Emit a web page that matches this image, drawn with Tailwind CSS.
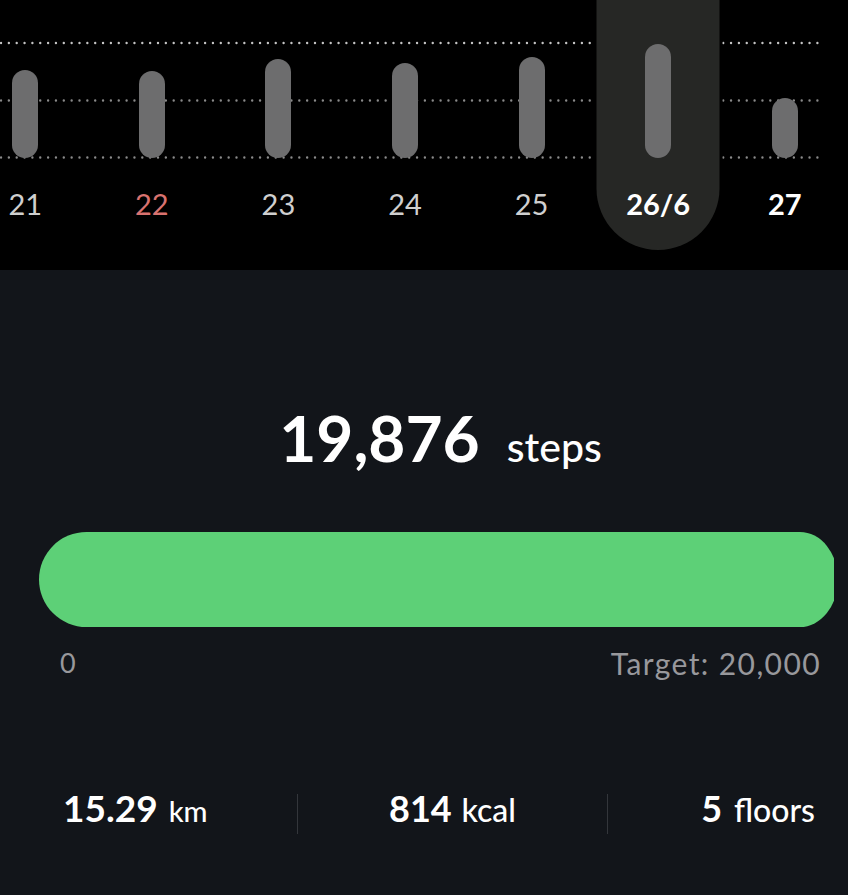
<!DOCTYPE html>
<html lang="en">
<head>
    <meta charset="UTF-8">
    <meta name="viewport" content="width=device-width, initial-scale=1.0">
    <title>Steps</title>
    <script src="https://cdn.jsdelivr.net/npm/@tailwindcss/browser@4"></script>
</head>
<body class="bg-[#12151a] font-['Lato',sans-serif] text-white w-[848px] h-[895px] overflow-hidden">
    <!-- Weekly chart -->
    <section class="relative h-[270px] bg-black overflow-hidden">
        <svg class="absolute left-0 top-0" width="848" height="270" fill="none" stroke-linecap="round" stroke-width="2.4">
            <line x1="1" y1="43" x2="822" y2="43" stroke="#c4c4c4" stroke-dasharray="0 7.85"></line>
            <line x1="1" y1="100.500" x2="822" y2="100.500" stroke="#8a8a8a" stroke-dasharray="0 7.85"></line>
            <line x1="1" y1="157.500" x2="822" y2="157.500" stroke="#8a8a8a" stroke-dasharray="0 7.85"></line>
        </svg>

        <div class="relative grid grid-cols-7 w-[886px] ml-[-38px]">
            <div class="flex flex-col items-center">
                <div class="h-[158px] flex items-end"><div class="w-[26px] h-[88px] rounded-full bg-[#6d6d6e]"></div></div>
                <span class="mt-[26px] text-[29px] leading-[40px] text-[#cfcfcf]">21</span>
            </div>
            <div class="flex flex-col items-center">
                <div class="h-[158px] flex items-end"><div class="w-[26px] h-[87px] rounded-full bg-[#6d6d6e]"></div></div>
                <span class="mt-[26px] text-[29px] leading-[40px] text-[#d9726f]">22</span>
            </div>
            <div class="flex flex-col items-center">
                <div class="h-[158px] flex items-end"><div class="w-[26px] h-[99px] rounded-full bg-[#6d6d6e]"></div></div>
                <span class="mt-[26px] text-[29px] leading-[40px] text-[#cfcfcf]">23</span>
            </div>
            <div class="flex flex-col items-center">
                <div class="h-[158px] flex items-end"><div class="w-[26px] h-[95px] rounded-full bg-[#6d6d6e]"></div></div>
                <span class="mt-[26px] text-[29px] leading-[40px] text-[#cfcfcf]">24</span>
            </div>
            <div class="flex flex-col items-center">
                <div class="h-[158px] flex items-end"><div class="w-[26px] h-[101px] rounded-full bg-[#6d6d6e]"></div></div>
                <span class="mt-[26px] text-[29px] leading-[40px] text-[#cfcfcf]">25</span>
            </div>
            <!-- Selected day -->
            <div class="relative flex flex-col items-center">
                <div class="absolute left-1/2 top-[-62px] w-[123px] h-[312px] -translate-x-1/2 rounded-full bg-[#262725] ring-[3px] ring-black"></div>
                <div class="relative h-[158px] flex items-end"><div class="w-[26px] h-[114px] rounded-full bg-[#6d6d6e]"></div></div>
                <span class="relative mt-[26px] text-[29px] leading-[40px] font-bold">26/6</span>
            </div>
            <div class="flex flex-col items-center">
                <div class="h-[158px] flex items-end"><div class="w-[26px] h-[60px] rounded-full bg-[#6d6d6e]"></div></div>
                <span class="mt-[26px] text-[29px] leading-[40px] font-bold">27</span>
            </div>
        </div>
    </section>

    <!-- Today's total -->
    <section class="flex items-baseline justify-center pt-[130px] h-[262px] ml-[33px]">
        <span class="text-[64px] leading-[76px] font-bold">19,876</span>
        <span class="ml-[27px] text-[41px] leading-[76px] font-medium">steps</span>
    </section>

    <!-- Progress bar -->
    <div class="ml-[39px] w-[795px] h-[95px] overflow-hidden">
        <div class="w-[799px] h-full rounded-l-[47.5px] rounded-r-[38px_47.5px] bg-[#5dd077]"></div>
    </div>
    <div class="flex justify-between items-center h-[40px] mt-[16px] pl-[60px] pr-[27px] text-[30px] text-[#98989c]">
        <span class="text-[27px]">0</span>
        <span class="tracking-[1.4px]">Target: 20,000</span>
    </div>

    <!-- Totals -->
    <div class="grid grid-cols-[297px_311px_1fr] items-start mt-[111px] h-[40px]">
        <div class="pl-[63px] font-bold text-[37px] leading-[28px]">15.29 <span class="ml-[2px] text-[29px] font-medium">km</span></div>
        <div class="h-[40px] border-x border-[#33363b] text-center font-bold text-[36px] leading-[28px]">814 <span class="ml-[1px] text-[32px] font-medium">kcal</span></div>
        <div class="pr-[33px] text-right font-bold text-[36px] leading-[28px]">5 <span class="ml-[3px] text-[32px] font-medium">floors</span></div>
    </div>
</body>
</html>
